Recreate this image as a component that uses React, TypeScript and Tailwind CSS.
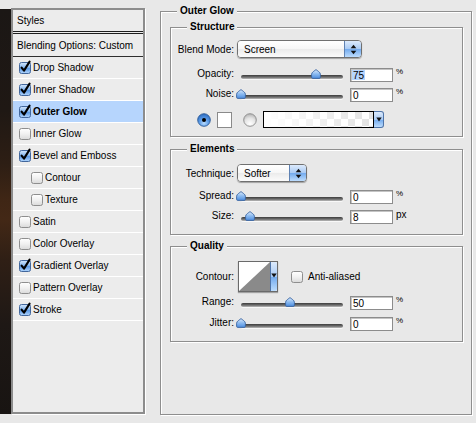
import React from "react";

function CheckBox({ checked }: { checked: boolean }) {
  return (
    <svg width="12" height="12" viewBox="0 0 12 12" className="shrink-0 overflow-visible">
      <defs>
        <linearGradient id="cbOn" x1="0" y1="0" x2="0" y2="1">
          <stop offset="0" stopColor="#d6e8fc" />
          <stop offset="0.45" stopColor="#86b7ef" />
          <stop offset="0.55" stopColor="#5e9be5" />
          <stop offset="1" stopColor="#b3d6fc" />
        </linearGradient>
        <linearGradient id="cbOff" x1="0" y1="0" x2="0" y2="1">
          <stop offset="0" stopColor="#ffffff" />
          <stop offset="0.5" stopColor="#f1f1f1" />
          <stop offset="1" stopColor="#d9d9d9" />
        </linearGradient>
      </defs>
      <rect
        x="0.5"
        y="0.5"
        width="11"
        height="11"
        rx="2"
        fill={checked ? "url(#cbOn)" : "url(#cbOff)"}
        stroke={checked ? "#42679c" : "#8e8e8e"}
      />
      {checked && (
        <path
          d="M2.6 5.6 L5 8.6 L10.6 -0.4"
          fill="none"
          stroke="#000"
          strokeWidth="2.1"
          strokeLinecap="round"
          strokeLinejoin="round"
        />
      )}
    </svg>
  );
}

function Radio({ on }: { on: boolean }) {
  return (
    <svg width="14" height="14" viewBox="0 0 14 14" className="shrink-0">
      <defs>
        <radialGradient id="radOn" cx="0.5" cy="0.75" r="0.7">
          <stop offset="0" stopColor="#b9dcff" />
          <stop offset="0.5" stopColor="#5d9de8" />
          <stop offset="1" stopColor="#2f6fc4" />
        </radialGradient>
        <radialGradient id="radOff" cx="0.5" cy="0.8" r="0.75">
          <stop offset="0" stopColor="#ffffff" />
          <stop offset="0.6" stopColor="#e4e4e4" />
          <stop offset="1" stopColor="#b9b9b9" />
        </radialGradient>
      </defs>
      <circle
        cx="7"
        cy="7"
        r="6.3"
        fill={on ? "url(#radOn)" : "url(#radOff)"}
        stroke={on ? "#2d5a96" : "#8a8a8a"}
        strokeWidth="0.9"
      />
      {on && <circle cx="7" cy="7" r="2" fill="#000" />}
    </svg>
  );
}

function Thumb() {
  return (
    <svg width="10" height="10" viewBox="0 0 10 10">
      <defs>
        <linearGradient id="thumbG" x1="0" y1="0" x2="0" y2="1">
          <stop offset="0" stopColor="#dcebfc" />
          <stop offset="0.5" stopColor="#8bbaf0" />
          <stop offset="1" stopColor="#4d8ddf" />
        </linearGradient>
      </defs>
      <path
        d="M5 0.6 C6.2 1.6 9.4 3.3 9.4 5.2 L9.4 8.3 Q9.4 9.4 8.3 9.4 L1.7 9.4 Q0.6 9.4 0.6 8.3 L0.6 5.2 C0.6 3.3 3.8 1.6 5 0.6Z"
        fill="url(#thumbG)"
        stroke="#3a64a0"
        strokeWidth="0.9"
      />
    </svg>
  );
}

function Slider({ offset }: { offset: number }) {
  return (
    <div className="relative w-[110px] h-[10px] ml-[3px] mt-[1px] shrink-0">
      <div className="absolute left-[4px] right-[4px] top-[6px] h-[4px] rounded-full bg-[linear-gradient(#3c3c3c,#6e6e6e_55%,#bdbdbd)] shadow-[0_1px_0_#f8f8f8]" />
      <div className="absolute top-0" style={{ left: offset - 1 }}>
        <Thumb />
      </div>
    </div>
  );
}

function Field({ value, selected }: { value: string; selected?: boolean }) {
  return (
    <div className="w-[43px] h-[14px] bg-white border border-[#8c8c8c] shadow-[inset_1px_1px_0_#c4c4c4] flex items-stretch pl-[1px] py-[1px] text-[10px] leading-[12px] shrink-0">
      <span className={selected ? "bg-[#b5d5ff] px-[1px] leading-[11px]" : "px-[1px] leading-[11px]"}>{value}</span>
    </div>
  );
}

function SliderRow({
  label,
  offset,
  value,
  unit,
  selected,
  mt,
}: {
  label: string;
  offset: number;
  value: string;
  unit: string;
  selected?: boolean;
  mt: string;
}) {
  return (
    <div className={`flex items-start h-[14px] ${mt}`}>
      <div className="w-[63px] text-right leading-[11px] shrink-0">{label}</div>
      <Slider offset={offset} />
      <div className="ml-[3px]">
        <Field value={value} selected={selected} />
      </div>
      {unit === "%" ? (
        <div className="ml-[3px] text-[8px] leading-[8px]">%</div>
      ) : (
        <div className="ml-[3px] text-[10px] leading-[10px]">{unit}</div>
      )}
    </div>
  );
}

function UpDown() {
  return (
    <svg width="7" height="11" viewBox="0 0 7 11">
      <path d="M3.5 0.8 L6.3 4.3 L0.7 4.3 Z" fill="#111" />
      <path d="M3.5 10.2 L6.3 6.7 L0.7 6.7 Z" fill="#111" />
    </svg>
  );
}

function Down() {
  return (
    <svg width="6" height="5" viewBox="0 0 6 5">
      <path d="M0.3 0.5 L5.7 0.5 L3 4.6 Z" fill="#111" />
    </svg>
  );
}

function Popup({ text, w }: { text: string; w: string }) {
  return (
    <div
      className={`${w} h-[18px] ml-[3px] flex rounded-[4px] border border-[#707070] overflow-hidden shadow-[0_1px_1px_rgba(0,0,0,0.3)] shrink-0`}
    >
      <div className="flex-1 flex items-center pl-[6px] bg-[linear-gradient(#ffffff,#f6f6f6_50%,#ebebeb_51%,#fbfbfb)]">
        {text}
      </div>
      <div className="w-[17px] flex items-center justify-center border-l border-[#5f82b3] bg-[linear-gradient(#dceafc,#a8caf4_50%,#72aaee_51%,#bcdcfd)]">
        <UpDown />
      </div>
    </div>
  );
}

function Group({
  title,
  className,
  children,
}: {
  title: string;
  className: string;
  children: React.ReactNode;
}) {
  return (
    <fieldset
      className={`border border-[#8e8e8e] shadow-[inset_1px_1px_0_#ffffff,1px_1px_0_#ffffff] ${className}`}
    >
      <legend className="ml-[16px] px-[3px] h-[14px] leading-[14px] font-bold text-[10px] bg-[#e8e8e8]">
        {title}
      </legend>
      {children}
    </fieldset>
  );
}

const styleItems: { label: string; checked: boolean; selected?: boolean; indent?: boolean }[] = [
  { label: "Drop Shadow", checked: true },
  { label: "Inner Shadow", checked: true },
  { label: "Outer Glow", checked: true, selected: true },
  { label: "Inner Glow", checked: false },
  { label: "Bevel and Emboss", checked: true },
  { label: "Contour", checked: false, indent: true },
  { label: "Texture", checked: false, indent: true },
  { label: "Satin", checked: false },
  { label: "Color Overlay", checked: false },
  { label: "Gradient Overlay", checked: true },
  { label: "Pattern Overlay", checked: false },
  { label: "Stroke", checked: true },
];

function LeftPanel() {
  return (
    <div className="w-[134px] h-[406px] mt-[8px] border-2 border-[#8c8c8c] bg-[#ececec] shadow-[1px_1px_0_#ffffff] shrink-0 flex flex-col">
      <div className="h-[24px] border-b-[3px] border-double border-[#1e1e1e] flex items-center pl-[4px]">Styles</div>
      <div className="h-[23px] border-b border-[#2e2e2e] flex items-center pl-[4px]">Blending Options: Custom</div>
      {styleItems.map((it) => (
        <div
          key={it.label}
          className={`h-[22px] border-b border-white flex items-center gap-[2px] ${
            it.indent ? "pl-[18px]" : "pl-[6px]"
          } ${it.selected ? "bg-[#b6d5fd] font-bold" : ""}`}
        >
          <CheckBox checked={it.checked} />
          <span>{it.label}</span>
        </div>
      ))}
    </div>
  );
}

function RightPanel() {
  return (
    <Group title="Outer Glow" className="w-[312px] h-[411px] mt-[4px] ml-[15px] shrink-0">
      <Group title="Structure" className="w-[293px] ml-[9px] mt-[2px] pb-[8px]">
        <div className="flex items-center h-[18px] mt-[6px]">
          <div className="w-[63px] text-right shrink-0">Blend Mode:</div>
          <Popup text="Screen" w="w-[125px]" />
        </div>
        <SliderRow label="Opacity:" offset={75} value="75" unit="%" selected mt="mt-[10px]" />
        <SliderRow label="Noise:" offset={0} value="0" unit="%" mt="mt-[6px]" />
        <div className="flex items-center h-[17px] mt-[9px] pl-[26px]">
          <Radio on />
          <div className="ml-[6px] w-[15px] h-[16px] bg-white border border-[#8a8a8a]" />
          <div className="ml-[11px] flex">
            <Radio on={false} />
          </div>
          <div className="ml-[6px] w-[121px] h-[17px] flex">
            <div className="flex-1 border border-black bg-[repeating-conic-gradient(#e2e2e2_0%_25%,#ffffff_0%_50%)] bg-[length:14px_14px]">
              <div className="w-full h-full bg-linear-to-r from-[#ffffff] to-[#ffffff00]" />
            </div>
            <div className="w-[10px] flex items-center justify-center rounded-r-[3px] border border-l-0 border-[#4f74a8] bg-[linear-gradient(#dceafc,#a8caf4_50%,#72aaee_51%,#bcdcfd)]">
              <Down />
            </div>
          </div>
        </div>
      </Group>

      <Group title="Elements" className="w-[293px] ml-[9px] mt-[5px] pb-[10px]">
        <div className="flex items-center h-[18px] mt-[8px]">
          <div className="w-[63px] text-right shrink-0">Technique:</div>
          <Popup text="Softer" w="w-[70px]" />
        </div>
        <SliderRow label="Spread:" offset={0} value="0" unit="%" mt="mt-[8px]" />
        <SliderRow label="Size:" offset={9} value="8" unit="px" mt="mt-[6px]" />
      </Group>

      <Group title="Quality" className="w-[293px] ml-[9px] mt-[4px] pb-[10px]">
        <div className="flex items-center h-[31px] mt-[8px]">
          <div className="w-[63px] text-right shrink-0">Contour:</div>
          <div className="ml-[4px] flex h-[31px] w-[40px] border border-[#6a6a6a] shadow-[0_1px_1px_rgba(0,0,0,0.3)] shrink-0">
            <svg width="31" height="29" viewBox="0 0 31 29" className="block">
              <rect x="0" y="0" width="31" height="29" fill="#ffffff" />
              <polygon points="0,29 31,0 31,29" fill="#8a8a8a" />
            </svg>
            <div className="flex-1 flex items-center justify-center pb-[3px] border-l border-[#4f74a8] rounded-r-[2px] bg-[linear-gradient(#dceafc,#a8caf4_50%,#72aaee_51%,#bcdcfd)]">
              <Down />
            </div>
          </div>
          <div className="ml-[13px] flex">
            <CheckBox checked={false} />
          </div>
          <span className="ml-[5px]">Anti-aliased</span>
        </div>
        <SliderRow label="Range:" offset={49} value="50" unit="%" mt="mt-[4px]" />
        <SliderRow label="Jitter:" offset={0} value="0" unit="%" mt="mt-[7px]" />
      </Group>
    </Group>
  );
}

export default function App() {
  return (
    <div className="w-[476px] h-[423px] bg-[#e8e8e8] flex items-start overflow-hidden text-[10px] text-black font-['Liberation_Sans',Arial,sans-serif] select-none">
      <div className="w-[11px] h-[405px] mt-[9px] shrink-0 bg-[linear-gradient(180deg,#1b1715_0%,#1f1814_25%,#2d1e14_38%,#3f2615_47%,#432816_52%,#2f1f15_62%,#1e1815_78%,#181412_100%)]" />
      <LeftPanel />
      <RightPanel />
    </div>
  );
}
